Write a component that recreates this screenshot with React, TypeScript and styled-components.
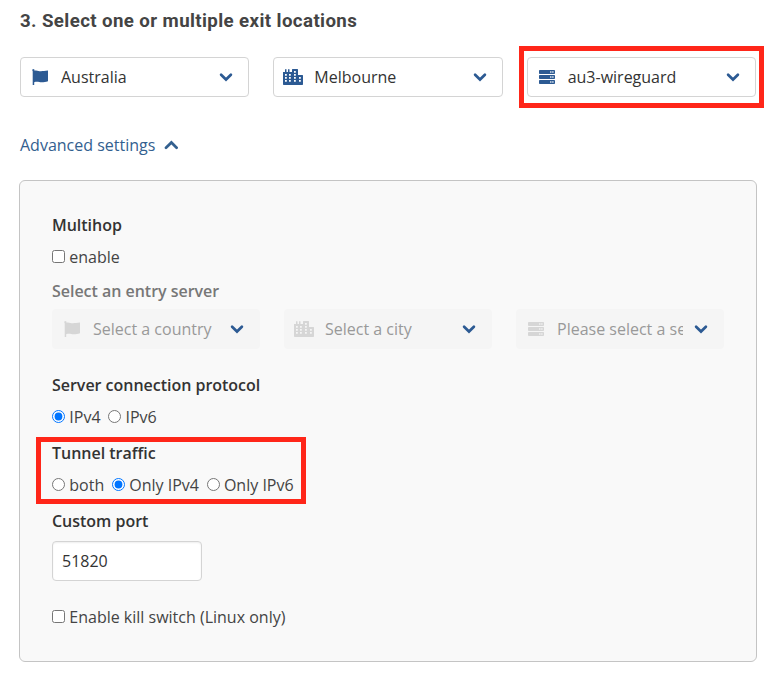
import React from "react";
import styled, { createGlobalStyle } from "styled-components";

const GlobalStyle = createGlobalStyle`
  *, *::before, *::after { box-sizing: border-box; }
  body {
    margin: 0;
    background: #fff;
    color: #444;
    font: 400 16px/24px "Open Sans", "Noto Sans", sans-serif;
  }
`;

const Page = styled.main`
  width: 773px;
  height: 674px;
  padding: 9px 16px 0 19px;
  overflow: hidden;
`;

const Title = styled.h2`
  margin: 0 0 24px 1px;
  font: 700 18.7px/24px Roboto, sans-serif;
  letter-spacing: 0.39px;
  white-space: nowrap;
  color: #444;
`;

const SelectRow = styled.div<{ $outer?: boolean }>`
  display: grid;
  grid-template-columns: repeat(3, minmax(0, 1fr));
  gap: 24px;
  margin: ${(p) => (p.$outer ? "0 1px" : "0")};
`;

const Highlight = styled.div<{ $inset: string }>`
  position: relative;
  min-width: 0;
  &::after {
    content: "";
    position: absolute;
    inset: ${(p) => p.$inset};
    border: 5px solid #ff2619;
    pointer-events: none;
  }
`;

const SelectBox = styled.button<{ $disabled?: boolean }>`
  display: flex;
  align-items: center;
  width: 100%;
  height: 40px;
  padding: 0 15px 0 8px;
  border: 1px solid ${(p) => (p.$disabled ? "#f5f5f5" : "#d4d4d4")};
  border-radius: 4px;
  background: ${(p) => (p.$disabled ? "#f5f5f5" : "#fff")};
  color: ${(p) => (p.$disabled ? "#999" : "#333")};
  font: inherit;
  text-align: left;
`;

const IconSlot = styled.span<{ $disabled?: boolean }>`
  display: flex;
  flex: none;
  justify-content: center;
  width: 22px;
  margin-right: 10px;
  color: ${(p) => (p.$disabled ? "#d6d6d6" : "#2c5a93")};
`;

const SelectLabel = styled.span`
  flex: 1;
  min-width: 0;
  overflow: hidden;
  white-space: nowrap;
`;

const ChevronSlot = styled.span`
  display: flex;
  flex: none;
  margin-left: 11px;
  color: #2c5a93;
`;

const AdvancedToggle = styled.button`
  display: flex;
  align-items: center;
  gap: 9px;
  margin: 36px 0 23px 1px;
  padding: 0;
  border: 0;
  background: none;
  color: #33608f;
  font: inherit;
`;

const Panel = styled.section`
  width: 738px;
  height: 482px;
  padding: 32px;
  border: 1px solid #c4c4c4;
  border-radius: 6px;
  background: #f9f9f9;
`;

const Field = styled.div<{ $gap: number }>`
  margin-bottom: ${(p) => p.$gap}px;
`;

const FieldTitle = styled.h3<{ $muted?: boolean; $gap?: number }>`
  margin: 0 0 ${(p) => p.$gap ?? 8}px;
  font-size: 16px;
  font-weight: 600;
  line-height: 24px;
  letter-spacing: -0.02px;
  color: ${(p) => (p.$muted ? "#777" : "#333")};
`;

const OptionRow = styled.div`
  display: flex;
  gap: 7.7px;
`;

const Option = styled.label`
  display: flex;
  align-items: center;
  white-space: nowrap;
  input {
    width: 13px;
    height: 13px;
    margin: 0 4.3px 1px 0;
  }
`;

const PortInput = styled.input`
  display: block;
  width: 150px;
  height: 40px;
  padding: 0 9px;
  border: 1px solid #d4d4d4;
  border-radius: 4px;
  background: #fff;
  box-shadow: inset 0 1px 2px rgba(0, 0, 0, 0.07);
  color: #333;
  font: inherit;
`;

const FlagIcon = () => (
  <svg width="16" height="16" viewBox="0 0 16 16" fill="currentColor">
    <path d="M0.3 1.200a1.100 1.100 0 1 1 2.100.5C5 .9 6.500 2.300 9 2.300c2.100 0 3.800-.5 7-.7v10.600c-2.200.8-4.200 1.100-6.200 1.100-2.800 0-4.400-1-7.600-.1V16H.7V2.200a1.200 1.200 0 0 1-.4-1z" />
  </svg>
);

const CityIcon = () => (
  <svg width="20" height="16" viewBox="0 0 20 16" fill="currentColor" fillRule="evenodd">
    <path d="M0 3h2V.2h1.500V3h1.500V.2h1.500V3H9V.6A.6.6 0 0 1 9.600 0h4.800a.6.6 0 0 1 .6.6V6h4.400a.6.6 0 0 1 .6.6v8.700a.7.7 0 0 1-.7.7H.7a.7.7 0 0 1-.7-.7zM2 5v1.700h1.800V5zM6 5v1.700h1.800V5zM11 2v1.700h1.800V2zM11 5v1.700h1.800V5zM2 8v1.700h1.800V8zM6 8v1.700h1.800V8zM11 8v1.700h1.800V8zM16 8v1.700h1.800V8zM2 11v1.700h1.800V11zM6 11v1.700h1.800V11zM11 11v1.700h1.800V11zM16 11v1.700h1.800V11z" />
  </svg>
);

const ServerIcon = () => (
  <svg width="16" height="14" viewBox="0 0 16 14" fill="currentColor" fillRule="evenodd">
    {[0, 5, 10].map((y) => (
      <path
        key={y}
        transform={`translate(0 ${y})`}
        d="M.8 0h14.400a.8.8 0 0 1 .8.8v2.400a.8.8 0 0 1-.8.8H.8a.8.8 0 0 1-.8-.8V.8A.8.8 0 0 1 .8 0zM11.200 1.300v1.400h1.200V1.300zM13.300 1.300v1.400h1.200V1.300z"
      />
    ))}
  </svg>
);

const Chevron = ({ up }: { up?: boolean }) => (
  <svg width="14" height="10" viewBox="0 0 14 10" fill="none" stroke="currentColor" strokeWidth="2.7" strokeLinecap="round">
    <path d={up ? "M2 7.700 7.400 2.500l5.200 5.200" : "M2.100 2.700 7 7.500l4.900-4.800"} />
  </svg>
);

const icons = { flag: FlagIcon, city: CityIcon, server: ServerIcon };

function Select({ icon, label, disabled }: { icon: keyof typeof icons; label: string; disabled?: boolean }) {
  const Icon = icons[icon];
  return (
    <SelectBox type="button" $disabled={disabled} disabled={disabled}>
      <IconSlot $disabled={disabled}><Icon /></IconSlot>
      <SelectLabel>{label}</SelectLabel>
      <ChevronSlot><Chevron /></ChevronSlot>
    </SelectBox>
  );
}

export default function App() {
  return (
    <>
      <GlobalStyle />
      <Page>
        <Title>3. Select one or multiple exit locations</Title>
        <SelectRow $outer>
          <Select icon="flag" label="Australia" />
          <Select icon="city" label="Melbourne" />
          <Highlight $inset="-11px -8px -11px -8px">
            <Select icon="server" label="au3-wireguard" />
          </Highlight>
        </SelectRow>
        <AdvancedToggle type="button">
          Advanced settings <Chevron up />
        </AdvancedToggle>
        <Panel>
          <Field $gap={10}>
            <FieldTitle>Multihop</FieldTitle>
            <Option><input type="checkbox" />enable</Option>
          </Field>
          <Field $gap={24}>
            <FieldTitle $muted $gap={6}>Select an entry server</FieldTitle>
            <SelectRow>
              <Select icon="flag" label="Select a country" disabled />
              <Select icon="city" label="Select a city" disabled />
              <Select icon="server" label="Please select a server" disabled />
            </SelectRow>
          </Field>
          <Field $gap={12}>
            <FieldTitle>Server connection protocol</FieldTitle>
            <OptionRow>
              <Option><input type="radio" name="protocol" defaultChecked />IPv4</Option>
              <Option><input type="radio" name="protocol" />IPv6</Option>
            </OptionRow>
          </Field>
          <Field $gap={12}>
            <Highlight $inset="-4px 418px -7px -16px">
              <FieldTitle>Tunnel traffic</FieldTitle>
              <OptionRow>
                <Option><input type="radio" name="tunnel" />both</Option>
                <Option><input type="radio" name="tunnel" defaultChecked />Only IPv4</Option>
                <Option><input type="radio" name="tunnel" />Only IPv6</Option>
              </OptionRow>
            </Highlight>
          </Field>
          <Field $gap={24}>
            <FieldTitle>Custom port</FieldTitle>
            <PortInput defaultValue="51820" aria-label="Custom port" />
          </Field>
          <Option><input type="checkbox" />Enable kill switch (Linux only)</Option>
        </Panel>
      </Page>
    </>
  );
}
